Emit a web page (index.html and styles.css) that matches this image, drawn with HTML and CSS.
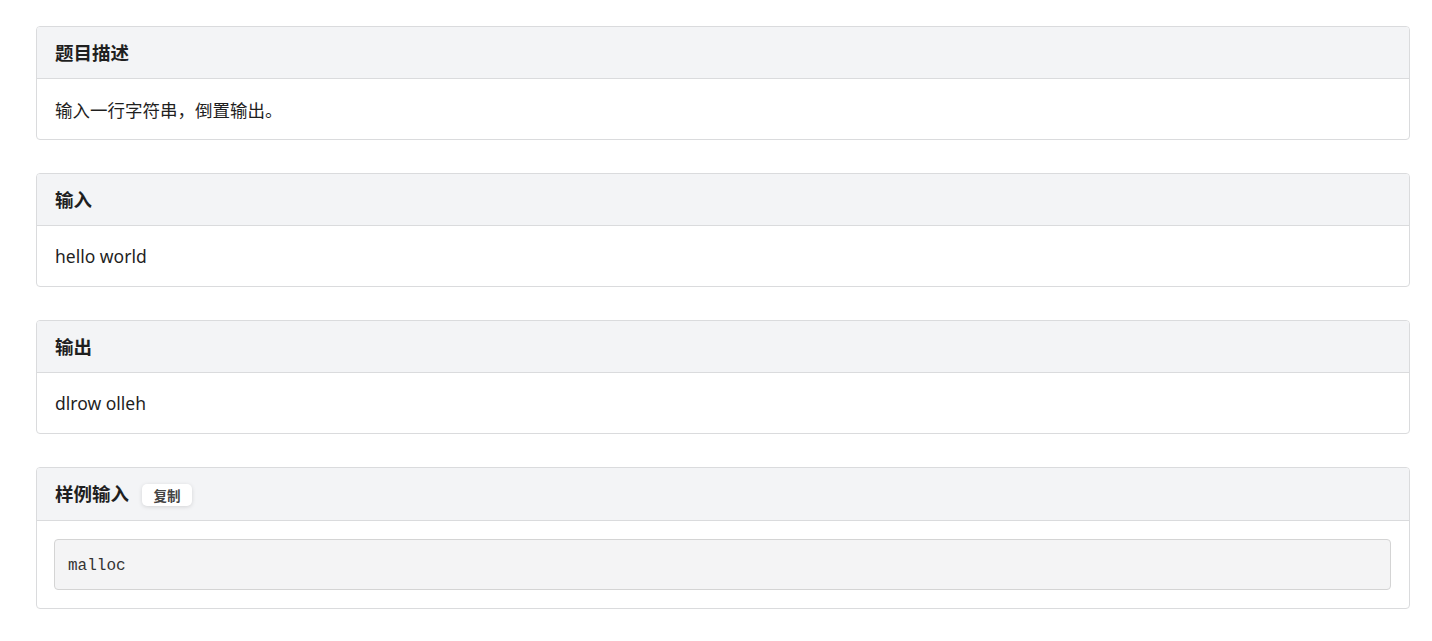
FILE: index.html
```html
<!DOCTYPE html>
<html lang="zh">
<head>
<meta charset="utf-8">
<link rel="stylesheet" href="styles.css">
</head>
<body>
<main class="page">
  <section class="card">
    <header class="card-head"><h2>题目描述</h2></header>
    <div class="card-body">输入一行字符串，倒置输出。</div>
  </section>
  <section class="card">
    <header class="card-head"><h2>输入</h2></header>
    <div class="card-body">hello world</div>
  </section>
  <section class="card">
    <header class="card-head"><h2>输出</h2></header>
    <div class="card-body">dlrow olleh</div>
  </section>
  <section class="card">
    <header class="card-head"><h2>样例输入</h2><button class="copy">复制</button></header>
    <div class="card-body code-body"><pre class="code">malloc</pre></div>
  </section>
</main>
</body>
</html>
```
FILE: styles.css
```css
html, body { margin: 0; padding: 0; background: #fff; }
body {
  font-family: "Noto Sans", "Noto Sans CJK SC", sans-serif;
  color: #1f1f1f;
}
.page {
  padding: 26px 22px 20px 36px;
  display: flex;
  flex-direction: column;
  gap: 33px;
}
.card {
  border: 1px solid #dadbdd;
  border-radius: 4px;
  overflow: hidden;
}
.card-head {
  background: #f3f4f6;
  border-bottom: 1px solid #dadbdd;
  height: 51px;
  padding: 0 18px;
  display: flex;
  align-items: center;
  gap: 13px;
}
.card-head h2 {
  margin: 0 0 2px;
  font-size: 18.5px;
  font-weight: 700;
  color: #1f1f1f;
}
.card-body {
  height: 60px;
  padding: 0 18px;
  display: flex;
  align-items: center;
  font-size: 17.5px;
}
.copy {
  font-family: "Noto Sans CJK SC", sans-serif;
  font-size: 13.5px;
  font-weight: 700;
  color: #444;
  background: #fff;
  border: none;
  border-radius: 5px;
  width: 50px;
  height: 22px;
  padding: 0;
  margin-top: 2px;
  box-shadow: 0 1px 4px rgba(0,0,0,0.13);
}
.card:last-child .card-head { height: 52px; }
.code-body {
  height: auto;
  display: block;
  padding: 18px 18px 18px 17px;
}
.code {
  margin: 0;
  height: 51px;
  box-sizing: border-box;
  border: 1px solid #d4d4d4;
  border-radius: 4px;
  background: #f4f4f5;
  padding: 3px 13px 0;
  display: flex;
  align-items: center;
  font-family: "Liberation Mono", "DejaVu Sans Mono", monospace;
  font-size: 16px;
  color: #333;
}
```
